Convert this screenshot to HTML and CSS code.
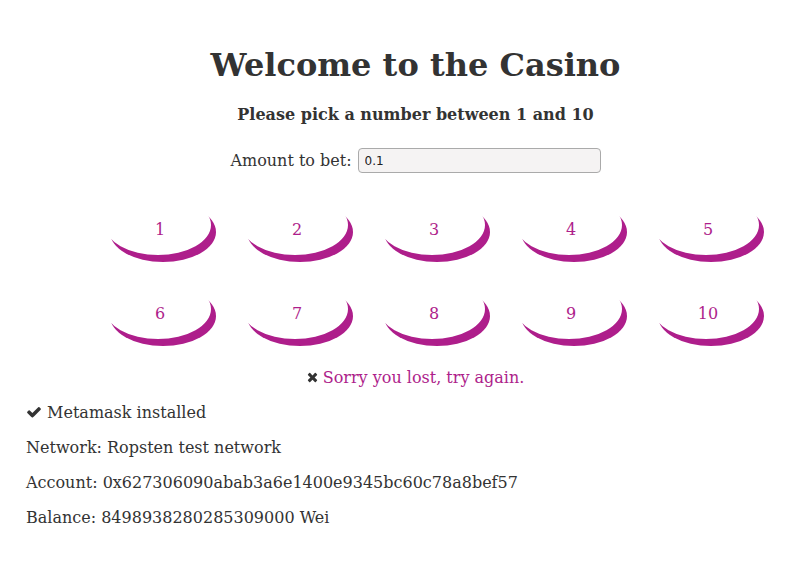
FILE: index.html
```html
<!DOCTYPE html>
<html>
<head>
<meta charset="utf-8">
<link rel="stylesheet" href="styles.css">
</head>
<body>
<div class="main">
  <h1 class="title">Welcome to the Casino</h1>
  <h3 class="subtitle">Please pick a number between 1 and 10</h3>
  <div class="bet">
    <label class="bet-label">Amount to bet:</label>
    <input class="bet-input" type="text" value="0.1">
  </div>
  <ul class="numbers">
    <li class="number">1</li>
    <li class="number">2</li>
    <li class="number">3</li>
    <li class="number">4</li>
    <li class="number">5</li>
    <li class="number">6</li>
    <li class="number">7</li>
    <li class="number">8</li>
    <li class="number">9</li>
    <li class="number">10</li>
  </ul>
  <p class="result"><svg class="icon-x" viewBox="0 0 1408 1792" width="11" height="14"><path d="M1298 1322q0 40-28 68l-136 136q-28 28-68 28t-68-28l-294-294-294 294q-28 28-68 28t-68-28l-136-136q-28-28-28-68t28-68l294-294-294-294q-28-28-28-68t28-68l136-136q28-28 68-28t68 28l294 294 294-294q28-28 68-28t68 28l136 136q28 28 28 68t-28 68l-294 294 294 294q28 28 28 68z"/></svg> Sorry you lost, try again.</p>
  <div class="info">
    <p class="line"><svg class="icon-check" viewBox="0 0 1792 1792" width="16" height="16"><path d="M1671 566q0 40-28 68l-724 724-136 136q-28 28-68 28t-68-28l-136-136-362-362q-28-28-28-68t28-68l136-136q28-28 68-28t68 28l294 295 656-657q28-28 68-28t68 28l136 136q28 28 28 68z"/></svg> Metamask installed</p>
    <p class="line">Network: Ropsten test network</p>
    <p class="line">Account: 0x627306090abab3a6e1400e9345bc60c78a8bef57</p>
    <p class="line">Balance: 8498938280285309000 Wei</p>
  </div>
</div>
</body>
</html>
```

FILE: styles.css
```css
html, body {
  margin: 0;
  padding: 0;
  background: #ffffff;
}
body {
  font-family: "DejaVu Serif", serif;
  font-size: 16px;
  color: #333333;
}
.main {
  padding: 0 0 0 26px;
}
.title {
  text-align: center;
  font-size: 32px;
  margin: 45px 0 0 0;
  line-height: 40px;
}
.subtitle {
  text-align: center;
  font-size: 16px;
  margin: 20px 0 0 0;
  line-height: 20px;
}
.bet {
  display: flex;
  justify-content: center;
  align-items: center;
  gap: 6px;
  margin-top: 23px;
}
.bet-label {
  font-size: 16px;
}
.bet-input {
  width: 243px;
  height: 25px;
  box-sizing: border-box;
  padding: 2px 6px;
  border: 1px solid #aaaaaa;
  border-radius: 4px;
  background: #f5f3f3;
  font-family: "DejaVu Sans", sans-serif;
  font-size: 12px;
  color: #222;
}
.numbers {
  list-style: none;
  margin: 29px 0 0 0;
  padding: 0 0 0 84px;
  display: grid;
  grid-template-columns: repeat(5, 106px);
  column-gap: 31px;
  row-gap: 24px;
}
.number {
  width: 106px;
  height: 60px;
  box-sizing: border-box;
  padding-right: 6px;
  border-radius: 50%;
  box-shadow: inset -5px -7px 0 #ae1e8b;
  background: #ffffff;
  color: #ae1e8b;
  text-align: center;
  line-height: 56px;
  font-size: 16px;
}
.result {
  text-align: center;
  color: #ae1e8b;
  margin: 22px 0 0 0;
  line-height: 19px;
}
.icon-x {
  fill: #333333;
  vertical-align: -1px;
}
.info {
  margin-top: 16px;
}
.line {
  margin: 0 0 16px 0;
  line-height: 19px;
}
.icon-check {
  fill: #333333;
  vertical-align: -2px;
}
```
